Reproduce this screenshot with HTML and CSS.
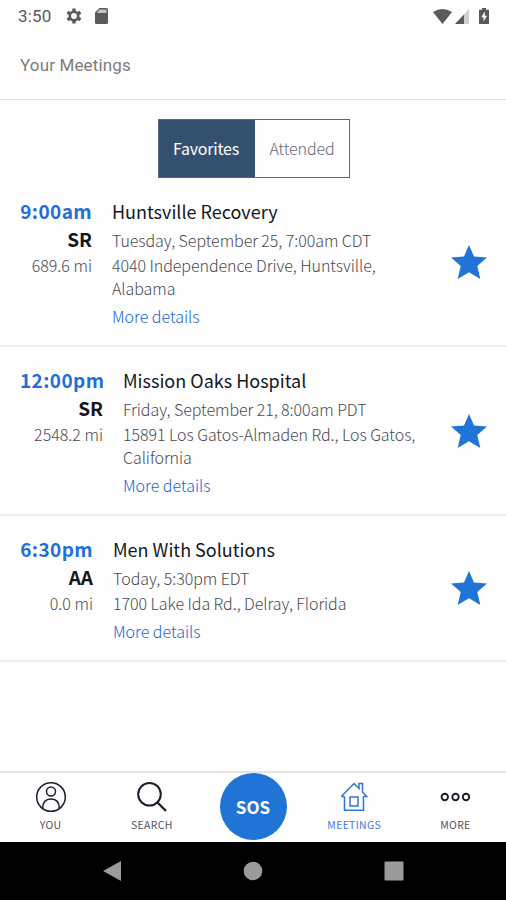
FILE: index.html
```html
<!DOCTYPE html>
<html lang="en">
<head>
    <meta charset="UTF-8">
    <meta name="viewport" content="width=device-width, initial-scale=1.0">
    <title>Your Meetings</title>
    <link rel="stylesheet" href="styles.css">
</head>
<body>
    <div class="status-bar">
        <span class="clock">3:50</span>
        <svg class="gear" width="16" height="16" viewBox="0 0 16 16"><circle cx="8" cy="8" r="4.2" fill="none" stroke="#5a5a5a" stroke-width="2.600"/><path d="M8 .5v3M8 12.500v3M1.500 4.250l2.600 1.500M11.900 10.250l2.600 1.500M1.500 11.750l2.600-1.500M11.900 5.750l2.600-1.500" stroke="#5a5a5a" stroke-width="3.400"/></svg>
        <svg class="sd" width="13" height="16" viewBox="0 0 13 16"><path d="M4.500 0H11.500Q13 0 13 1.500V14.500Q13 16 11.500 16H1.500Q0 16 0 14.500V4.500Z" fill="#5a5a5a"/><path d="M4.500 1.500H11.500V5H2.500V3.800Z" fill="#c4c4c4"/></svg>
        <svg class="wifi" width="19" height="15" viewBox="0 0 19 15"><path d="M0 3Q9.500-3 19 3L9.500 15Z" fill="#5a5a5a"/></svg>
        <svg class="signal" width="14" height="15" viewBox="0 0 14 15"><path d="M14 0V15H0Z" fill="#cfcfcf"/><path d="M9 5.400V15H0Z" fill="#5a5a5a"/></svg>
        <svg class="battery" width="10" height="16" viewBox="0 0 10 16"><path d="M3 0h4v1.800h3V16H0V1.800h3z" fill="#5a5a5a"/><path d="M5.800 3.500L2.300 9.200h2.200v4.300L8 7.800H5.800z" fill="#fff"/></svg>
    </div>

    <header class="header">Your Meetings</header>

    <main class="content">
        <div class="tabs">
            <div class="tab active"><span>Favorites</span></div>
            <div class="tab"><span>Attended</span></div>
        </div>

        <section class="meeting">
            <div class="when first">
                <div class="time">9:00am</div>
                <div class="type">SR</div>
                <div class="distance">689.6 mi</div>
            </div>
            <div class="info">
                <h2 class="name">Huntsville Recovery</h2>
                <div class="date">Tuesday, September 25, 7:00am CDT</div>
                <div class="address">4040 Independence Drive, Huntsville,<br>Alabama</div>
                <a class="details">More details</a>
            </div>
            <svg class="star" width="36" height="34" viewBox="0 0 36 34"><path d="M18 0L23 11.500L36 12.500L26.300 21L29.300 34L18 27.300L6.700 34L9.700 21L0 12.500L13 11.500Z"/></svg>
        </section>

        <section class="meeting">
            <div class="when second">
                <div class="time">12:00pm</div>
                <div class="type">SR</div>
                <div class="distance">2548.2 mi</div>
            </div>
            <div class="info">
                <h2 class="name">Mission Oaks Hospital</h2>
                <div class="date">Friday, September 21, 8:00am PDT</div>
                <div class="address">15891 Los Gatos-Almaden Rd., Los Gatos,<br>California</div>
                <a class="details">More details</a>
            </div>
            <svg class="star" width="36" height="34" viewBox="0 0 36 34"><path d="M18 0L23 11.500L36 12.500L26.300 21L29.300 34L18 27.300L6.700 34L9.700 21L0 12.500L13 11.500Z"/></svg>
        </section>

        <section class="meeting">
            <div class="when third">
                <div class="time">6:30pm</div>
                <div class="type">AA</div>
                <div class="distance">0.0 mi</div>
            </div>
            <div class="info">
                <h2 class="name">Men With Solutions</h2>
                <div class="date">Today, 5:30pm EDT</div>
                <div class="address">1700 Lake Ida Rd., Delray, Florida</div>
                <a class="details">More details</a>
            </div>
            <svg class="star" width="36" height="34" viewBox="0 0 36 34"><path d="M18 0L23 11.500L36 12.500L26.300 21L29.300 34L18 27.300L6.700 34L9.700 21L0 12.500L13 11.500Z"/></svg>
        </section>
    </main>

    <nav class="nav">
        <a class="nav-item">
            <svg width="32" height="32" viewBox="0 0 32 32"><circle cx="16" cy="16" r="14.300"/><circle cx="16" cy="10.500" r="4.500"/><path d="M7.700 27.500C7.700 21 11 18 16 18S24.300 21 24.300 27.500"/></svg>
            <span>YOU</span>
        </a>
        <a class="nav-item">
            <svg width="32" height="32" viewBox="0 0 32 32"><circle cx="13.500" cy="13.300" r="11.300" stroke-width="2"/><path d="M21.500 21.500L30 30" stroke-width="2.300"/></svg>
            <span>SEARCH</span>
        </a>
        <a class="nav-item"><b class="sos">SOS</b></a>
        <a class="nav-item current">
            <svg width="32" height="32" viewBox="0 0 32 32"><path d="M6.500 15.500V29.300H25.500V15.500M3.300 15.500L16 2.500L21 7.500V2.500H24.500V11L28.700 15.500H25.500M3.300 15.500H6.500M12 16h8v9h-8z"/></svg>
            <span>MEETINGS</span>
        </a>
        <a class="nav-item">
            <svg width="32" height="32" viewBox="0 0 32 32"><g stroke-width="1.900"><circle cx="5.800" cy="16" r="3.200"/><circle cx="16.500" cy="16" r="3.200"/><circle cx="27" cy="16" r="3.200"/></g></svg>
            <span>MORE</span>
        </a>
    </nav>

    <footer class="android-bar">
        <svg width="20" height="22" viewBox="0 0 20 22"><path d="M19 1V21L1 11Z"/></svg>
        <svg width="20" height="20" viewBox="0 0 20 20"><circle cx="10" cy="10" r="9.300"/></svg>
        <svg width="20" height="20" viewBox="0 0 20 20"><rect x=".5" y=".5" width="19" height="19" rx="1"/></svg>
    </footer>
</body>
</html>
```
FILE: styles.css
```css
* {
    box-sizing: border-box;
}
body {
    margin: 0;
    height: 900px;
    display: flex;
    flex-direction: column;
    overflow: hidden;
    background: #fefefe;
    font-family: "Noto Sans CJK SC", "Open Sans", sans-serif;
    font-size: 16px;
    font-weight: 300;
    color: #484b50;
}
.status-bar {
    height: 32px;
    padding: 0 17px 0 18px;
    display: flex;
    align-items: center;
    font-family: Roboto, sans-serif;
    font-weight: 400;
}
.clock {
    width: 34px;
    font-size: 17px;
    letter-spacing: 0.2px;
    color: #5a5a5a;
}
.gear {
    margin: 0 13px 0 14px;
}
.wifi {
    margin-left: auto;
}
.signal {
    margin: 0 10px 0 3px;
}
.header {
    height: 68px;
    padding: 0 20px;
    line-height: 66px;
    border-bottom: 1px solid #e4e4e4;
    font-family: Roboto, sans-serif;
    font-size: 17px;
    font-weight: 400;
    letter-spacing: 0.15px;
    color: #7c7c7c;
}
.content {
    flex: 1;
}
.tabs {
    width: 192px;
    height: 59px;
    margin: 19px auto 0 158px;
    display: flex;
    border: 1px solid #596480;
}
.tab {
    flex: 1;
    line-height: 57px;
    text-align: center;
    letter-spacing: -0.1px;
    color: #666976;
}
.tab.active {
    flex: 0 0 96px;
    padding-right: 2px;
    background: #34506f;
    color: #fff;
    font-weight: 400;
    letter-spacing: -0.2px;
}
.meeting {
    display: flex;
    padding: 19px 19px 15px 20px;
    border-bottom: 2px solid #ebebeb;
}
.when {
    margin-right: 20px;
    text-align: right;
    white-space: nowrap;
}
.first {
    width: 72px;
}
.second {
    width: 83px;
}
.third {
    width: 73px;
}
.time {
    line-height: 27px;
    font-size: 19px;
    font-weight: bold;
    letter-spacing: 0.4px;
    color: #1f6fd6;
}
.type {
    line-height: 29px;
    font-size: 19px;
    font-weight: bold;
    color: #15171f;
}
.distance {
    line-height: 25px;
}
.info {
    flex: 1;
    white-space: nowrap;
}
.name {
    margin: 0 0 2px;
    line-height: 28px;
    font-size: 18px;
    font-weight: 400;
    color: #15171f;
}
.date {
    line-height: 26px;
    letter-spacing: -0.06px;
}
.address {
    margin-top: 1px;
    line-height: 23px;
    letter-spacing: -0.06px;
}
.details {
    display: block;
    margin-top: 3px;
    line-height: 27px;
    color: #2064d2;
}
.star {
    align-self: center;
    margin-bottom: 4px;
    fill: #2074d6;
}
.nav {
    height: 71px;
    display: flex;
    border-top: 2px solid #e3e4e5;
}
.nav-item {
    flex: 1;
    display: flex;
    flex-direction: column;
    align-items: center;
    padding-top: 8px;
    font-size: 10.5px;
    font-weight: 400;
    line-height: 14px;
    color: #50535a;
}
.nav-item svg {
    fill: none;
    stroke: #1a1d2b;
    stroke-width: 1.5;
}
.nav-item span {
    margin-top: 5px;
    letter-spacing: 0.3px;
}
.nav-item.current {
    color: #3e7adb;
}
.nav-item.current svg {
    stroke: #2f76d6;
}
.sos {
    width: 67px;
    height: 67px;
    margin-top: -8px;
    border-radius: 50%;
    background: #2074d6;
    color: #fff;
    font-size: 17px;
    line-height: 67px;
    text-align: center;
}
.android-bar {
    height: 58px;
    padding: 0 102px;
    display: flex;
    align-items: center;
    justify-content: space-between;
    background: #000;
}
.android-bar svg {
    fill: #9b9b9b;
}
```
